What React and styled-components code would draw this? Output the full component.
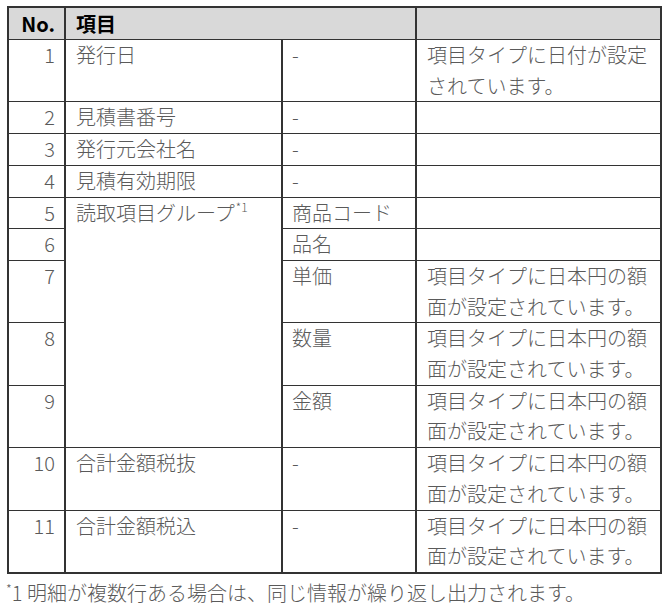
import React from "react";
import styled, { createGlobalStyle } from "styled-components";

const Global = createGlobalStyle`
  html, body { background: #ffffff; }
  body {
    margin: 0;
    padding: 6px 10px 0 7px;
    font-family: "Noto Sans CJK JP", "Noto Sans", sans-serif;
  }
`;

const Table = styled.table`
  border-collapse: collapse;
  table-layout: fixed;
  width: 653px;
  border: 2px solid #333;
  font-size: 20px;
  line-height: 30.7px;
  color: #5a5a5a;
  font-weight: 300;
`;

const Col = styled.col`
  width: ${(p) => p.$w}px;
`;

const Th = styled.th`
  background: #d9d9d9;
  color: #000;
  font-weight: 700;
  text-align: ${(p) => p.$align || "left"};
  padding: 0 ${(p) => (p.$align === "right" ? "9px" : "10px")};
  border: 1px solid #333;
  border-left-width: 2px;
  border-right-width: 2px;
  height: 31px;
  vertical-align: middle;
  line-height: 30px;
`;

const Td = styled.td`
  border: 1px solid #333;
  border-left-width: 2px;
  border-right-width: 2px;
  padding: 0 ${(p) => (p.$num ? "9px" : "10px")} 0 ${(p) => (p.$num ? "0" : p.$narrow ? "9px" : "10px")};
  text-align: ${(p) => (p.$num ? "right" : "left")};
  vertical-align: top;
  white-space: normal;
  word-break: break-all;
`;

const Sup = styled.sup`
  font-size: 12px;
  line-height: 0;
  vertical-align: 9px;
  margin-left: 1px;
`;

const Note = styled.p`
  margin: 4px 0 0 -1px;
  font-size: 20px;
  line-height: 30px;
  color: #5a5a5a;
  font-weight: 300;
`;

const NoteMark = styled.span`
  font-size: 13px;
  vertical-align: 7px;
  line-height: 0;
`;

const YEN = "項目タイプに日本円の額面が設定されています。";

const rows = [
  { no: 1, item: "発行日", sub: "-", desc: "項目タイプに日付が設定されています。" },
  { no: 2, item: "見積書番号", sub: "-", desc: "" },
  { no: 3, item: "発行元会社名", sub: "-", desc: "" },
  { no: 4, item: "見積有効期限", sub: "-", desc: "" },
  { no: 5, item: "読取項目グループ", group: 5, sub: "商品コード", desc: "" },
  { no: 6, sub: "品名", desc: "" },
  { no: 7, sub: "単価", desc: YEN },
  { no: 8, sub: "数量", desc: YEN },
  { no: 9, sub: "金額", desc: YEN },
  { no: 10, item: "合計金額税抜", sub: "-", desc: YEN },
  { no: 11, item: "合計金額税込", sub: "-", desc: YEN },
];

export default function App() {
  return (
    <>
      <Global />
      <Table>
        <colgroup>
          <Col $w={57} />
          <Col $w={217} />
          <Col $w={134} />
          <Col $w={245} />
        </colgroup>
        <thead>
          <tr>
            <Th $align="right">No.</Th>
            <Th colSpan={2}>項目</Th>
            <Th />
          </tr>
        </thead>
        <tbody>
          {rows.map((r) => (
            <tr key={r.no}>
              <Td $num>{r.no}</Td>
              {r.item && (
                <Td rowSpan={r.group || 1}>
                  {r.item}
                  {r.group && <Sup>*1</Sup>}
                </Td>
              )}
              <Td $narrow>{r.sub}</Td>
              <Td>{r.desc}</Td>
            </tr>
          ))}
        </tbody>
      </Table>
      <Note>
        <NoteMark>*</NoteMark>1 明細が複数行ある場合は、同じ情報が繰り返し出力されます。
      </Note>
    </>
  );
}
